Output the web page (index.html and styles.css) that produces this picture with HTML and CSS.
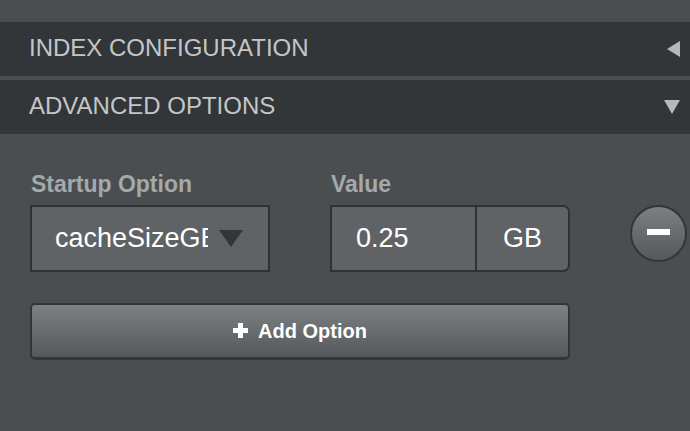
FILE: index.html
```html
<!DOCTYPE html>
<html>
<head>
<meta charset="utf-8">
<link rel="stylesheet" href="styles.css">
</head>
<body>
<div class="page">
  <div class="section-header">
    <span class="section-title">INDEX CONFIGURATION</span>
    <span class="arrow arrow-left"></span>
  </div>
  <div class="section-header">
    <span class="section-title">ADVANCED OPTIONS</span>
    <span class="arrow arrow-down"></span>
  </div>
  <div class="options">
    <div class="option-row">
      <div class="field field-option">
        <label class="field-label">Startup Option</label>
        <div class="select">
          <span class="select-text">cacheSizeGB</span>
          <span class="select-caret"></span>
        </div>
      </div>
      <div class="field field-value">
        <label class="field-label">Value</label>
        <div class="input-group">
          <span class="input">0.25</span>
          <span class="addon">GB</span>
        </div>
      </div>
      <button class="remove-btn" type="button"><span class="minus"></span></button>
    </div>
    <button class="add-btn" type="button">
      <svg class="plus" width="15" height="15" viewBox="0 0 15 15"><rect x="5" y="0" width="5" height="15" fill="#fff"/><rect x="0" y="5" width="15" height="5" fill="#fff"/></svg>
      <span>Add Option</span>
    </button>
  </div>
</div>
</body>
</html>
```
FILE: styles.css
```css
* { box-sizing: border-box; }
html, body {
  margin: 0;
  padding: 0;
  background: #4a4e51;
  font-family: "Liberation Sans", Arial, sans-serif;
}
.page {
  padding-top: 22px;
  width: 690px;
  height: 431px;
  overflow: hidden;
}
.section-header {
  height: 54px;
  margin-bottom: 4px;
  background: #333638;
  display: flex;
  align-items: center;
  justify-content: space-between;
  padding: 0 10px 0 29px;
}
.section-title {
  color: #c3c7c9;
  font-size: 24px;
  line-height: 26px;
  margin-top: -2px;
}
.arrow {
  width: 0;
  height: 0;
}
.arrow-left {
  border-top: 8px solid transparent;
  border-bottom: 8px solid transparent;
  border-right: 13px solid #b5b9bb;
}
.arrow-down {
  border-left: 8px solid transparent;
  border-right: 8px solid transparent;
  border-top: 14px solid #b5b9bb;
}
.options {
  padding: 33px 0 0 30px;
}
.option-row {
  display: flex;
  align-items: flex-start;
}
.field {
  width: 240px;
  flex-shrink: 0;
}
.field-option { margin-right: 60px; }
.field-label {
  display: block;
  color: #a4a9ac;
  font-weight: bold;
  font-size: 23px;
  line-height: 26px;
  margin-left: 1px;
  margin-bottom: 8px;
}
.select {
  height: 67px;
  border: 2px solid #2f3234;
  background: #5f6366;
  display: flex;
  align-items: center;
  padding: 0 25px 0 23px;
}
.select-text {
  color: #fff;
  font-size: 27px;
  width: 153px;
  overflow: hidden;
  white-space: nowrap;
}
.select-caret {
  margin-left: auto;
  width: 0;
  height: 0;
  border-left: 12.5px solid transparent;
  border-right: 12.5px solid transparent;
  border-top: 17px solid #333537;
}
.input-group {
  display: flex;
  height: 67px;
}
.input {
  width: 147px;
  flex-shrink: 0;
  border: 2px solid #2f3234;
  background: #5f6366;
  color: #fff;
  font-size: 27px;
  display: flex;
  align-items: center;
  padding-left: 24px;
}
.addon {
  flex: 1;
  border: 2px solid #2f3234;
  border-left: none;
  border-radius: 0 7px 7px 0;
  background: #5f6366;
  color: #fff;
  font-size: 27px;
  display: flex;
  align-items: center;
  justify-content: center;
}
.remove-btn {
  flex-shrink: 0;
  margin-left: 60px;
  margin-top: 34px;
  width: 57px;
  height: 57px;
  border-radius: 50%;
  border: 2px solid #333638;
  background: linear-gradient(#7c8083, #55585b);
  display: flex;
  align-items: center;
  justify-content: center;
  padding: 0;
}
.minus {
  display: block;
  width: 23px;
  height: 6px;
  background: #fff;
  margin-top: -3px;
}
.add-btn {
  margin-top: 31px;
  width: 540px;
  height: 57px;
  border: 2px solid #333638;
  border-bottom-width: 3px;
  border-radius: 5px;
  background: linear-gradient(#7d8184, #55585b);
  color: #fff;
  font-family: "Liberation Sans", Arial, sans-serif;
  font-weight: bold;
  font-size: 20px;
  display: flex;
  align-items: center;
  justify-content: center;
  gap: 10px;
  padding: 0;
}
.plus { display: block; margin-top: -2px; }
```
